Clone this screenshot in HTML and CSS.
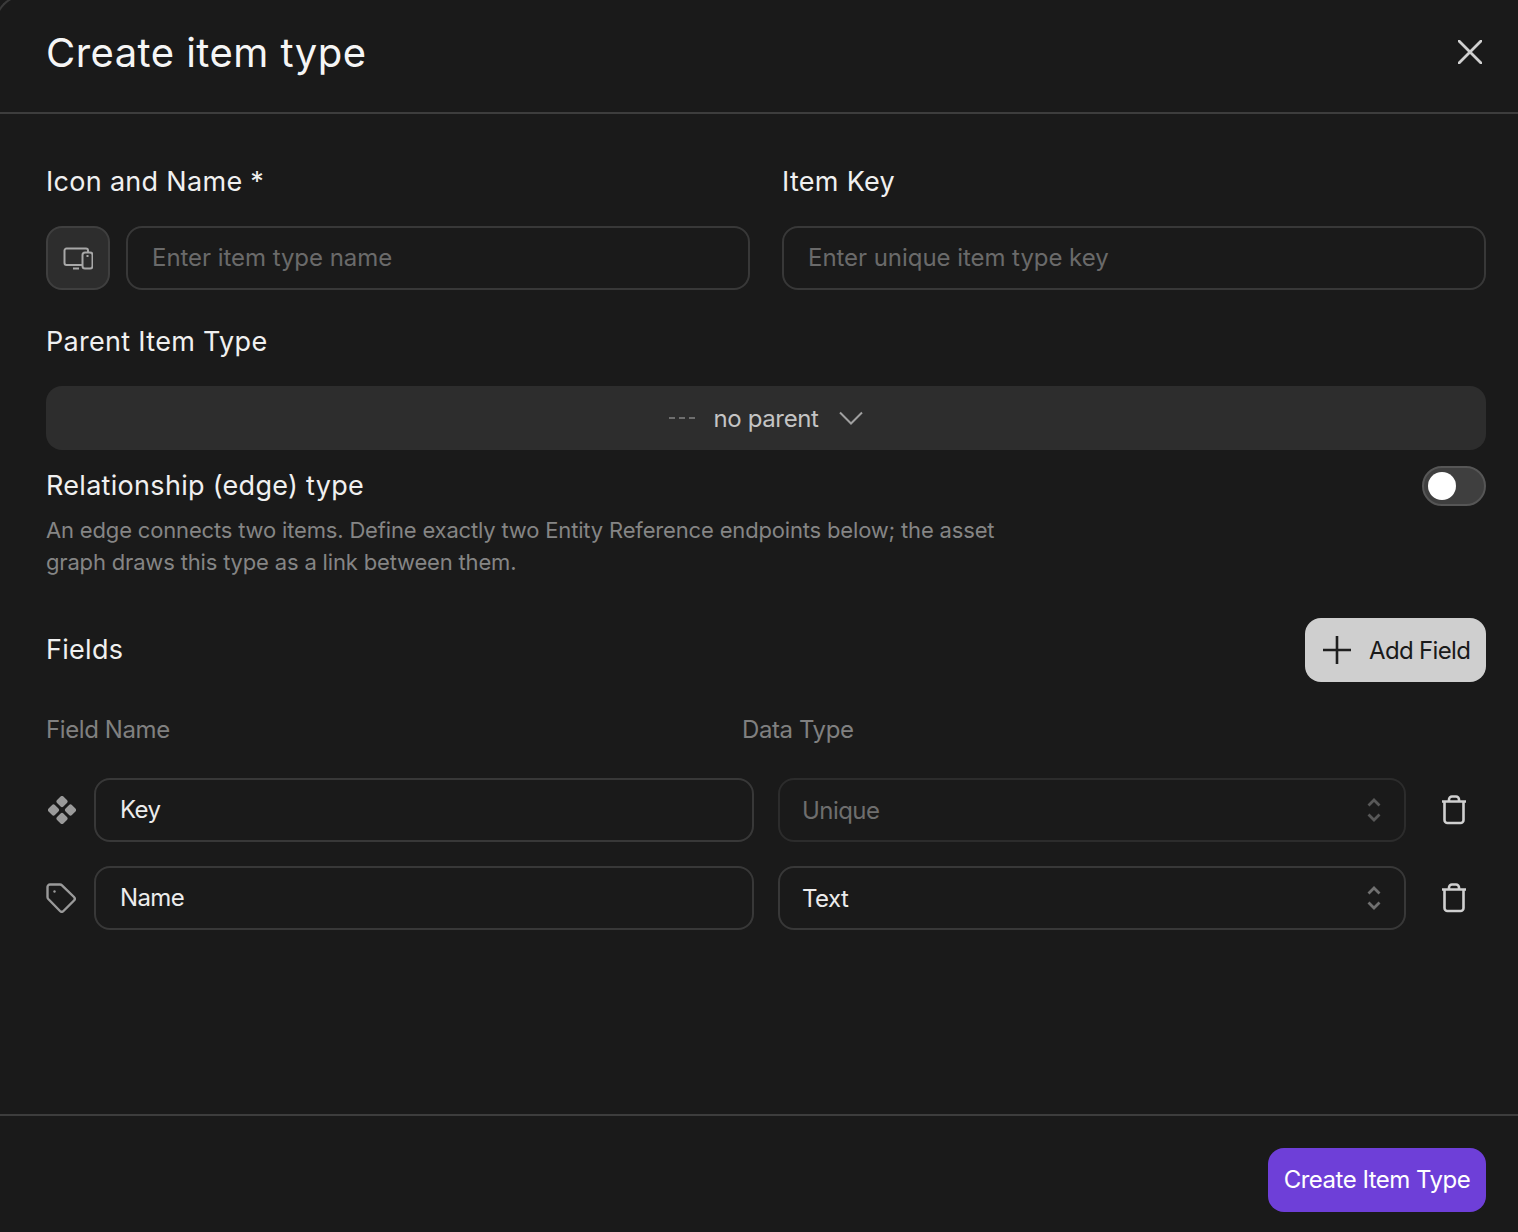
FILE: index.html
```html
<!DOCTYPE html>
<html lang="en">
<head>
<meta charset="utf-8">
<title>Create item type</title>
<link rel="stylesheet" href="styles.css">
</head>
<body>
<div class="modal">
  <header class="head">
    <h1 class="title">Create item type</h1>
    <svg class="close" viewBox="0 0 24 24"><path d="M1 1 23 23M23 1 1 23"/></svg>
  </header>
  <main class="body">
    <div class="top-row">
      <div class="col-name">
        <div class="label">Icon and Name *</div>
        <div class="name-row">
          <div class="icon-btn">
            <svg viewBox="0 0 30 24" class="dev"><path d="M19 19H3.500a2 2 0 0 1-2-2V4.500a2 2 0 0 1 2-2H23a2 2 0 0 1 2 2v2"/><path d="M10 22.500h6"/><rect x="19.500" y="6.500" width="10" height="16" rx="2.500"/><path d="M23.500 10h2"/></svg>
          </div>
          <div class="input ph grow">Enter item type name</div>
        </div>
      </div>
      <div class="col-key">
        <div class="label">Item Key</div>
        <div class="input ph">Enter unique item type key</div>
      </div>
    </div>
    <div class="label parent-label">Parent Item Type</div>
    <div class="select-parent">
      <span class="dashes"></span>
      <span>no parent</span>
      <svg class="chev" viewBox="0 0 24 14"><path d="M1 1.500 12 12.500 23 1.500"/></svg>
    </div>
    <div class="edge-row">
      <div class="label">Relationship (edge) type</div>
      <div class="toggle"><span class="knob"></span></div>
    </div>
    <p class="desc">An edge connects two items. Define exactly two Entity Reference endpoints below; the asset graph draws this type as a link between them.</p>
    <div class="fields-head">
      <div class="label">Fields</div>
      <button class="add">
        <svg viewBox="0 0 30 30"><path d="M15 1v28M1 15h28"/></svg>
        <span>Add Field</span>
      </button>
    </div>
    <div class="col-heads"><span class="ch1">Field Name</span><span>Data Type</span></div>
    <div class="row">
      <svg class="row-ico key" viewBox="0 0 28 28"><g fill="#9a9a9a"><rect x="9.500" y="1" width="9" height="9" rx="2" transform="rotate(45 14 5.500)"/><rect x="9.500" y="18" width="9" height="9" rx="2" transform="rotate(45 14 22.500)"/><rect x="1" y="9.500" width="9" height="9" rx="2" transform="rotate(45 5.500 14)"/><rect x="18" y="9.500" width="9" height="9" rx="2" transform="rotate(45 22.500 14)"/></g></svg>
      <div class="input field">Key</div>
      <div class="dt disabled">Unique<svg class="updown" viewBox="0 0 14 28"><path d="M1.500 9.500 7 4 12.500 9.500M1.500 18.500 7 24 12.500 18.500"/></svg></div>
      <svg class="trash" viewBox="0 0 26 30"><path d="M1 6.500h24M3.500 6.500V25a3 3 0 0 0 3 3h13a3 3 0 0 0 3-3V6.500M8 6.500V4.500a3 3 0 0 1 3-3h4a3 3 0 0 1 3 3v2"/></svg>
    </div>
    <div class="row">
      <svg class="row-ico tag" viewBox="0 0 30 30"><path d="M1.500 4a2.500 2.500 0 0 1 2.500-2.500h10a3 3 0 0 1 2 .8L28 14a2.500 2.500 0 0 1 0 3.500L17.500 28a2.500 2.500 0 0 1-3.500 0L2.300 16a3 3 0 0 1-.8-2z"/><circle cx="8.500" cy="8.500" r="1.200" class="dot"/></svg>
      <div class="input field">Name</div>
      <div class="dt">Text<svg class="updown" viewBox="0 0 14 28"><path d="M1.500 9.500 7 4 12.500 9.500M1.500 18.500 7 24 12.500 18.500"/></svg></div>
      <svg class="trash" viewBox="0 0 26 30"><path d="M1 6.500h24M3.500 6.500V25a3 3 0 0 0 3 3h13a3 3 0 0 0 3-3V6.500M8 6.500V4.500a3 3 0 0 1 3-3h4a3 3 0 0 1 3 3v2"/></svg>
    </div>
  </main>
  <footer class="foot"><button class="create">Create Item Type</button></footer>
</div>
</body>
</html>
```

FILE: styles.css
```css
* { box-sizing: border-box; }
html, body { margin: 0; height: 100%; background: #1a1a1a; }
body { font-family: Inter, "Liberation Sans", sans-serif; color: #f2f2f2; overflow: hidden; }
.modal { position: relative; overflow: hidden; height: 1232px; display: flex; flex-direction: column; background: #1a1a1a; }
.modal::before { content: ""; position: absolute; left: -6px; top: -6px; width: 64px; height: 64px; border: solid #3a3a3a; border-width: 2px 0 0 2px; border-radius: 32px 0 0 0; }
.head { height: 114px; border-bottom: 2px solid #3d3d3d; padding: 0 36px 6px 46px; display: flex; align-items: center; justify-content: space-between; }
.title { margin: 0; font-size: 40px; font-weight: 400; line-height: 48px; letter-spacing: .45px; color: #f5f5f5; }
.close { width: 24px; height: 24px; fill: none; stroke: #d0d0d0; stroke-width: 2.800; stroke-linecap: round; margin-bottom: 2px; }
.body { flex: 1; padding: 48px 32px 0 46px; display: flex; flex-direction: column; }
.label { font-size: 27px; line-height: 40px; letter-spacing: .3px; color: #f0f0f0; }
.top-row { display: flex; gap: 32px; }
.col-name { width: 704px; }
.col-key { flex: 1; }
.name-row { display: flex; gap: 16px; }
.grow { flex: 1; }
.label + .input, .label + .name-row { margin-top: 24px; }
.input { height: 64px; border: 2px solid #383838; border-radius: 16px; padding: 0 24px 1px; display: flex; align-items: center; font-size: 24px; letter-spacing: -.05px; color: #ececec; }
.ph { color: #6a6a6a; }
.field { width: 660px; letter-spacing: -.6px; }
.icon-btn { width: 64px; height: 64px; background: #2d2d2d; border: 2px solid #3f3f3f; border-radius: 16px; display: flex; align-items: center; justify-content: center; }
.dev { width: 30px; height: 24px; fill: none; stroke: #a8a8a8; stroke-width: 2; }
.parent-label { margin-top: 32px; }
.select-parent { margin-top: 24px; height: 64px; background: #2d2d2d; border-radius: 16px; display: flex; align-items: center; justify-content: center; gap: 18px; font-size: 24px; letter-spacing: -.35px; color: #c4c4c4; }
.dashes { width: 26px; height: 2px; background: repeating-linear-gradient(90deg, #6e6e6e 0 6px, transparent 6px 10px); }
.chev { width: 24px; height: 14px; fill: none; stroke: #a0a0a0; stroke-width: 2; margin-left: 2px; }
.edge-row { margin-top: 16px; display: flex; justify-content: space-between; align-items: center; height: 40px; }
.toggle { width: 64px; height: 40px; border-radius: 20px; background: #3f3f3f; border: 2px solid #565656; padding: 4px; }
.knob { display: block; width: 28px; height: 28px; border-radius: 50%; background: #fff; }
.desc { margin: 8px 0 0; width: 970px; font-size: 22px; line-height: 32px; letter-spacing: -.17px; color: #858585; }
.fields-head { margin-top: 40px; display: flex; justify-content: space-between; align-items: center; height: 64px; }
.add { height: 64px; width: 181px; padding: 0 16px 0 17px; border: 0; border-radius: 16px; background: #cfcfcf; color: #1a1a1a; display: flex; align-items: center; gap: 17px; font: inherit; font-size: 24px; letter-spacing: -.65px; white-space: nowrap; }
.add svg { width: 30px; height: 30px; fill: none; stroke: #1f1f1f; stroke-width: 2.600; flex: none; }
.col-heads { margin-top: 32px; display: flex; font-size: 24px; line-height: 32px; letter-spacing: -.4px; color: #808080; }
.ch1 { width: 696px; }
.row { display: flex; align-items: center; margin-top: 32px; height: 64px; }
.row + .row { margin-top: 24px; }
.row-ico { width: 30px; height: 30px; flex: none; margin: 0 18px 0 0; }
.row-ico.key { width: 28px; height: 28px; margin: 0 18px 0 2px; }
.tag { fill: none; stroke: #9a9a9a; stroke-width: 2.400; }
.dot { fill: #9a9a9a; stroke: none; }
.dt { width: 628px; height: 64px; margin-left: 24px; border: 2px solid #383838; border-radius: 16px; padding: 0 22px; display: flex; align-items: center; justify-content: space-between; font-size: 24px; letter-spacing: -.55px; color: #ececec; }
.dt.disabled { border-color: #2c2c2c; color: #6e6e6e; }
.updown { width: 14px; height: 28px; fill: none; stroke: #707070; stroke-width: 2.800; margin-right: 1px; }
.disabled .updown { stroke: #585858; }
.trash { width: 26px; height: 30px; margin-left: 35px; fill: none; stroke: #d0d0d0; stroke-width: 2.600; flex: none; }
.foot { height: 118px; border-top: 2px solid #3d3d3d; padding: 32px 32px 0 0; display: flex; justify-content: flex-end; align-items: flex-start; }
.create { height: 64px; width: 218px; border: 0; border-radius: 16px; background: #6e3fd8; color: #fff; font: inherit; font-size: 24px; letter-spacing: -.5px; padding: 0 0 1px; }
```
